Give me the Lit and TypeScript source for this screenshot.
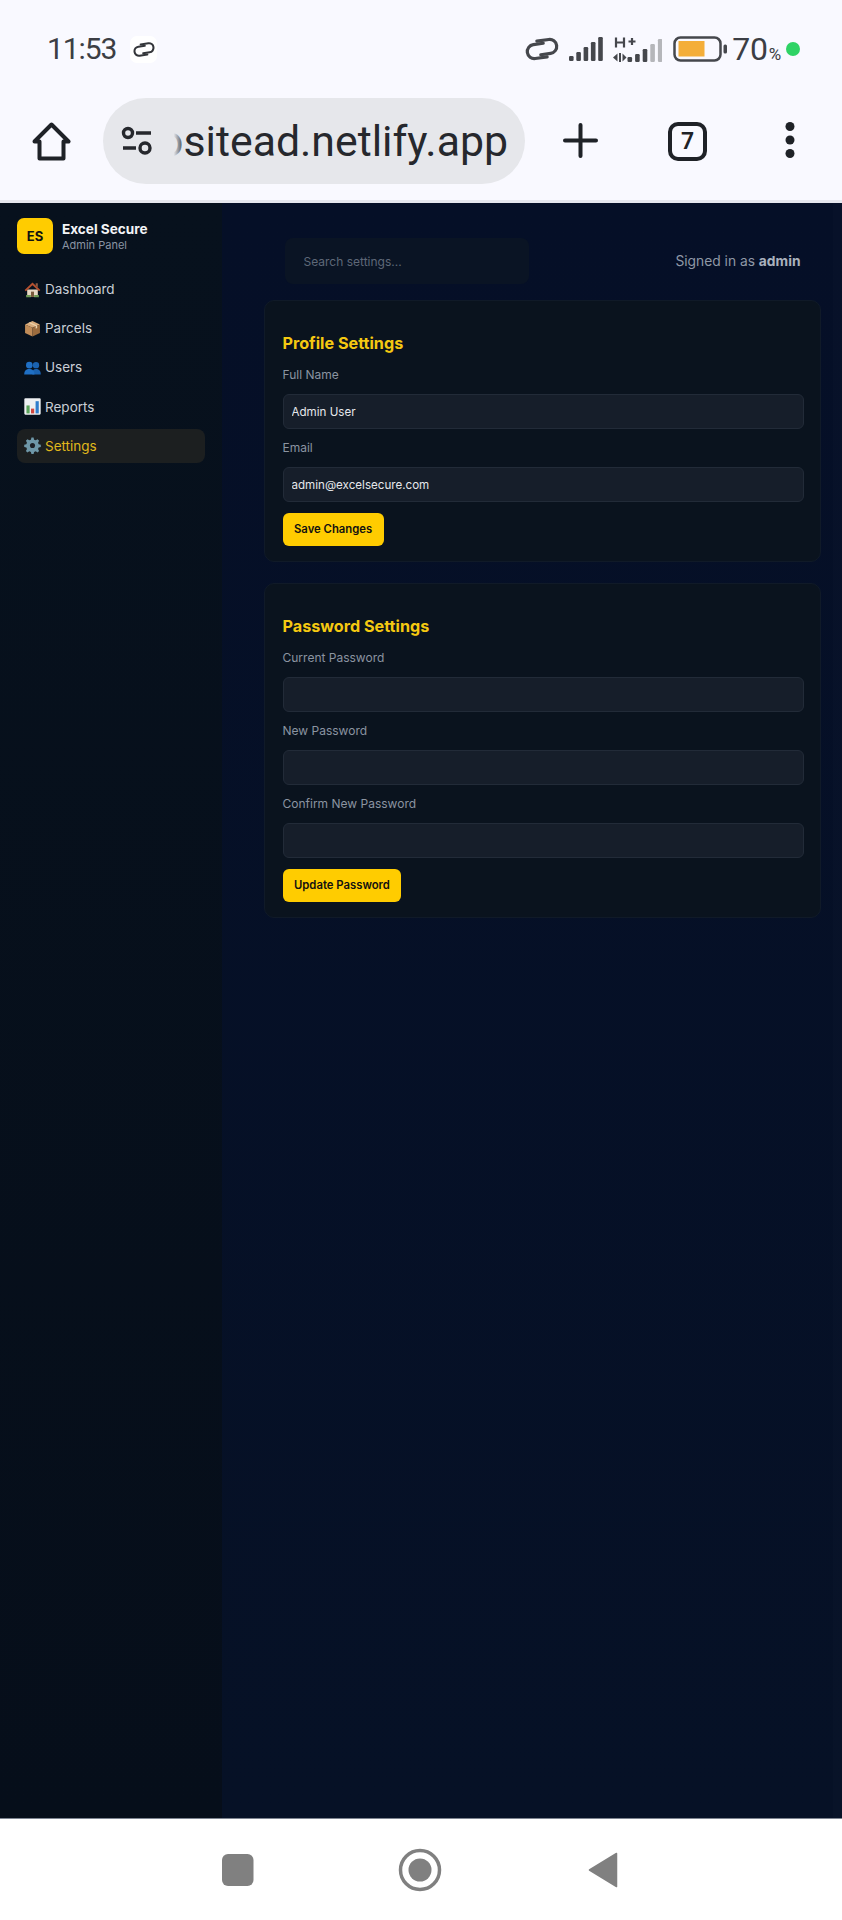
import { LitElement, html, css, svg } from "lit";
import { customElement } from "lit/decorators.js";

const link = (w: number, h: number, c: string) => html`<svg width=${w} height=${h} viewBox="0 0 34 26" fill="none" stroke=${c} stroke-width="3.200" stroke-linecap="round">
  <g transform="rotate(-8 17 13)">
    <path d="M19 7.500H9a7 7 0 0 0 0 14H21"/>
    <path d="M15 18.500h10a7 7 0 0 0 0-14H13"/>
  </g>
</svg>`;

const bars = (cols: string[], x0: number, pitch: number, base: number, hs: number[]) => svg`${cols.map((c, i) => svg`<rect x=${x0 + i * pitch} y=${base - hs[i]} width="4.600" height=${hs[i]} rx="1.200" fill=${c}></rect>`)}`;

const icons: Record<string, unknown> = {
  home: html`<svg class="emoji" viewBox="0 0 16 16"><path d="M3 8h10v7H3z" fill="#e8d9c4"/><path d="M.6 8.500 8 1.500l7.400 7-1.200 1.100L8 3.900 1.800 9.600z" fill="#b5502f"/><path d="M11 2h2v4l-2-1.800z" fill="#8a5a44"/><rect x="6.600" y="10" width="2.800" height="5" fill="#7a5a3c"/><path d="M2 13.200h4.400v2H2zM9.600 13.200H14v2H9.600z" fill="#6f9a56"/></svg>`,
  box: html`<svg class="emoji" viewBox="0 0 16 16"><path d="M8 1 15 4.200 8 7.400 1 4.200z" fill="#d9ac7c"/><path d="M1 4.200 8 7.400V15.500L1 12.300z" fill="#c08c58"/><path d="M15 4.200 8 7.400v8.100l7-3.200z" fill="#9c6c3e"/><path d="M4.200 2.700 11 5.800v2.400l1.400-.6V5.200L5.600 2.100z" fill="#eed2ac"/></svg>`,
  users: html`<svg class="emoji" viewBox="0 0 16 16"><circle cx="11.300" cy="5.800" r="3" fill="#1a62b0"/><path d="M7.800 14.500c0-3.400 1-5 3.500-5s4.500 1.600 4.500 5z" fill="#1a62b0"/><circle cx="5" cy="5.800" r="3.100" fill="#1f6fc4"/><path d="M.2 14.500c0-3.400 2-5 4.800-5s4.800 1.600 4.800 5z" fill="#1f6fc4"/></svg>`,
  chart: html`<svg class="emoji" viewBox="0 0 16 16"><rect x=".3" y=".3" width="15.400" height="15.400" rx="1" fill="#eef0f2"/><rect x="2.300" y="7" width="3" height="7.500" fill="#5aa35a"/><rect x="6.600" y="10" width="3" height="4.500" fill="#d0473f"/><rect x="10.900" y="3" width="3" height="11.500" fill="#2f7dcc"/></svg>`,
  gear: html`<svg class="emoji" viewBox="0 0 16 16"><path d="M7 .5h2l.5 2 1.500.6 1.800-1 1.400 1.400-1 1.800.6 1.500 2 .5v2l-2 .5-.6 1.500 1 1.800-1.400 1.400-1.800-1-1.500.6-.5 2H7l-.5-2-1.500-.6-1.800 1-1.400-1.400 1-1.800-.6-1.500-2-.5v-2l2-.5.6-1.500-1-1.800L3.200 2.100l1.800 1 1.500-.6z" fill="#6e97a8"/><circle cx="8" cy="8" r="2.400" fill="#1d2026"/></svg>`,
};

const D = "#45474c";

@customElement("app-root")
export class AppRoot extends LitElement {
  static styles = css`
    :host { display: block; width: 842px; height: 1920px; font-family: Inter, "Liberation Sans", sans-serif; }
    .page { display: flex; flex-direction: column; height: 1920px; background: #fff; }
    .chrome { flex: none; height: 203px; background: #f9f9ff; border-bottom: 3px solid #e6e7ee; box-sizing: border-box; font-family: Roboto, sans-serif; color: #3c3e44; }
    .status { height: 98px; display: flex; align-items: center; padding: 0 42px 0 47px; box-sizing: border-box; }
    .time { font-size: 30px; letter-spacing: -1.100px; line-height: 1; width: 69px; white-space: nowrap; }
    .badge { margin-left: 14px; width: 27px; height: 27px; background: #fff; border-radius: 7px; display: flex; align-items: center; justify-content: center; }
    .spacer { flex: 1; }
    .right { display: flex; align-items: center; }
    .sig { margin-left: 10px; }
    .hplus { margin-left: 10px; }
    .bat { margin-left: 11px; }
    .pct { font-size: 32px; margin-left: 5px; line-height: 1; letter-spacing: -.2px; }
    .pct small { font-size: 17px; margin-left: 1px; }
    .dot { width: 14px; height: 14px; border-radius: 50%; background: #2fd365; margin-left: 5px; }
    .toolbar { height: 102px; display: flex; align-items: flex-start; position: relative; }
    .home { margin: 24px 0 0 32px; flex: none; }
    .pill { margin: 0 0 0 32px; width: 422px; height: 86px; background: #e6e7eb; border-radius: 43px; flex: none; display: flex; align-items: center; position: relative; overflow: hidden; }
    .tune { margin-left: 18px; flex: none; }
    .url { position: absolute; left: 67px; right: 17px; top: 0; bottom: 0; display: flex; align-items: center; justify-content: flex-end; font-size: 42.800px; color: #26282d; white-space: nowrap; overflow: hidden; }
    .fade { position: absolute; left: 67px; top: 20px; width: 15px; height: 50px; background: linear-gradient(90deg, #e6e7eb 25%, rgba(230,231,235,0)); }
    .plus { margin: 25px 0 0 38px; flex: none; }
    .tab { margin: 24px 0 0 70px; width: 39px; height: 39px; box-sizing: border-box; border: 4px solid #1f2227; border-radius: 10px; display: flex; align-items: center; justify-content: center; font-size: 23px; font-weight: 600; color: #1f2227; flex: none; }
    .more { margin: 23px 0 0 78px; flex: none; }
    .app { flex: 1; display: flex; min-height: 0; }
    aside { width: 222px; flex: none; box-sizing: border-box; padding: 15px 17px; background: linear-gradient(180deg, #07111d 0%, #060e1a 100%); }
    .brand { display: flex; align-items: center; gap: 9px; margin-bottom: 18px; }
    .logo { width: 36px; height: 36px; background: #ffcc00; border-radius: 7px; display: flex; align-items: center; justify-content: center; color: #111; font-weight: 700; font-size: 13px; }
    .b1 { font-size: 13.600px; font-weight: 700; color: #f3f4f6; line-height: 16px; }
    .b2 { font-size: 11px; color: #8a94a3; line-height: 14px; margin-top: 1px; }
    nav { display: flex; flex-direction: column; gap: 5.200px; }
    .item { height: 34px; display: flex; align-items: center; gap: 4px; padding: 0 7px; border-radius: 8px; font-size: 13.500px; color: #c9ced6; }
    .item.on { background: #1c1f20; color: #e0b81c; }
    .emoji { width: 17px; height: 17px; flex: none; }
    main { flex: 1; min-width: 0; background: linear-gradient(180deg, #050f27 0%, #061126 100%); padding: 35px 21px 0 42px; box-sizing: border-box; position: relative; }
    .strip { position: absolute; top: 0; bottom: 0; right: 0; width: 9px; background: rgba(255,255,255,.012); }
    .top { display: flex; align-items: center; justify-content: space-between; padding: 0 20.500px; margin-bottom: 16px; }
    .search { width: 244px; height: 46px; box-sizing: border-box; background: #0a1424; border: none; border-radius: 8px; padding: 0 19px; font: 12px Inter, sans-serif; color: #ccc; outline: none; }
    .search::placeholder { color: #5e6878; }
    .who { font-size: 13.800px; color: #8f98a6; }
    .who b { font-weight: 700; color: #a9b1bd; }
    .card { background: #0a131e; border: 1px solid #101a28; border-radius: 10px; padding: 33px 16.500px 15.500px 17.500px; margin-bottom: 21px; box-sizing: border-box; position: relative; }
    h2 { margin: 0 0 13.500px; font-size: 16.200px; line-height: 19px; font-weight: 700; color: #f5c911; }
    label { display: block; font-size: 12px; line-height: 15px; color: #8b94a1; margin-bottom: 12.500px; }
    input.f { display: block; width: 100%; box-sizing: border-box; height: 35px; background: #161e2a; border: 1px solid #222b38; border-radius: 6px; padding: 0 8px; font: 11.600px Inter, sans-serif; color: #e5e7eb; outline: none; margin-bottom: 10.500px; }
    button { display: block; height: 33px; padding: 0 11.500px; background: #ffcc00; color: #111; border: none; border-radius: 6px; font: 600 11.300px Inter, sans-serif; margin-top: 0.500px; }
    .sys { flex: none; height: 102px; box-sizing: border-box; border-top: 1px solid #7d8490; background: #fff; display: flex; align-items: center; padding-left: 222px; }
    .sys svg { display: block; flex: none; }
    .s2 { margin-left: 144px; }
    .s3 { margin-left: 146px; }
  `;

  private field(label: string, value = "") {
    return html`<label>${label}</label><input class="f" .value=${value} />`;
  }

  private navItem(icon: string, label: string, on = false) {
    return html`<div class="item ${on ? "on" : ""}">${icons[icon]}<span>${label}</span></div>`;
  }

  render() {
    return html`<div class="page">
      <div class="chrome">
        <div class="status">
          <span class="time">11:53</span>
          <span class="badge">${link(22, 17, "#33353a")}</span>
          <span class="spacer"></span>
          <div class="right">
            ${link(34, 26, D)}
            <svg class="sig" width="34" height="24" viewBox="0 0 34 24">${bars([D, D, D, D, D], 0, 7.300, 24, [5, 9, 14, 19, 24])}</svg>
            <svg class="hplus" width="49" height="27" viewBox="0 0 49 27">
              <path d="M3 1.500v10M11 1.500v10M3 6.500h8M15.500 5.500h7M19 2v7" fill="none" stroke=${D} stroke-width="2.200"/>
              <path d="M4.500 17.500 0 21.500l4.500 4zM6 17v9h2v-9zM9.500 17.500v8l4-4z" fill=${D}/>
              ${bars([D, D, D, "#b5b6ba", "#b5b6ba"], 14.500, 7.600, 26, [5, 8, 13, 18, 23])}
            </svg>
            <svg class="bat" width="54" height="26" viewBox="0 0 54 26" fill="none">
              <rect x="1.500" y="1.500" width="46" height="23" rx="6" stroke=${D} stroke-width="2.500"/>
              <rect x="5.500" y="5" width="26" height="15.500" fill="#f4ae39"/>
              <rect x="50.500" y="8.500" width="3.500" height="9" rx="1.500" fill=${D}/>
            </svg>
            <span class="pct">70<small>%</small></span>
            <span class="dot"></span>
          </div>
        </div>
        <div class="toolbar">
          <svg class="home" width="39" height="39" viewBox="0 0 39 39" fill="none" stroke="#1f2227" stroke-width="4" stroke-linejoin="round" stroke-linecap="round"><path d="M2.500 19.500 19.500 2.500 36.500 19.500h-5v17h-24v-17z"/></svg>
          <div class="pill">
            <svg class="tune" width="32" height="30" viewBox="0 0 32 30" fill="none" stroke="#26282d" stroke-width="3.400"><circle cx="7" cy="7" r="4.500"/><path d="M15 7h15M2 22h13"/><circle cx="24" cy="22" r="5"/></svg>
            <div class="url">positead.netlify.app</div>
            <div class="fade"></div>
          </div>
          <svg class="plus" width="35" height="35" viewBox="0 0 35 35" stroke="#1f2227" stroke-width="4" stroke-linecap="round"><path d="M17.500 2v31M2 17.500h31"/></svg>
          <div class="tab">7</div>
          <svg class="more" width="10" height="38" viewBox="0 0 10 38" fill="#1f2227"><circle cx="5" cy="5.500" r="4.500"/><circle cx="5" cy="19" r="4.500"/><circle cx="5" cy="32.500" r="4.500"/></svg>
        </div>
      </div>
      <div class="app">
        <aside>
          <div class="brand">
            <div class="logo">ES</div>
            <div><div class="b1">Excel Secure</div><div class="b2">Admin Panel</div></div>
          </div>
          <nav>
            ${this.navItem("home", "Dashboard")}
            ${this.navItem("box", "Parcels")}
            ${this.navItem("users", "Users")}
            ${this.navItem("chart", "Reports")}
            ${this.navItem("gear", "Settings", true)}
          </nav>
        </aside>
        <main>
          <div class="strip"></div>
          <div class="top">
            <input class="search" placeholder="Search settings..." />
            <div class="who">Signed in as <b>admin</b></div>
          </div>
          <section class="card">
            <h2>Profile Settings</h2>
            ${this.field("Full Name", "Admin User")}
            ${this.field("Email", "admin@excelsecure.com")}
            <button>Save Changes</button>
          </section>
          <section class="card">
            <h2>Password Settings</h2>
            ${this.field("Current Password")}
            ${this.field("New Password")}
            ${this.field("Confirm New Password")}
            <button>Update Password</button>
          </section>
        </main>
      </div>
      <div class="sys">
        <svg width="32" height="32" viewBox="0 0 32 32"><rect width="31.500" height="32" rx="6" fill="#808080"/></svg>
        <svg class="s2" width="44" height="44" viewBox="0 0 44 44" fill="none"><circle cx="22" cy="22" r="19.500" stroke="#808080" stroke-width="3.500"/><circle cx="22" cy="22" r="11.500" fill="#808080"/></svg>
        <svg class="s3" width="30" height="36" viewBox="0 0 30 36"><path d="M28.500 1.500 1.500 18l27 16.500z" fill="#808080" stroke="#808080" stroke-width="1.500" stroke-linejoin="round"/></svg>
      </div>
    </div>`;
  }
}
